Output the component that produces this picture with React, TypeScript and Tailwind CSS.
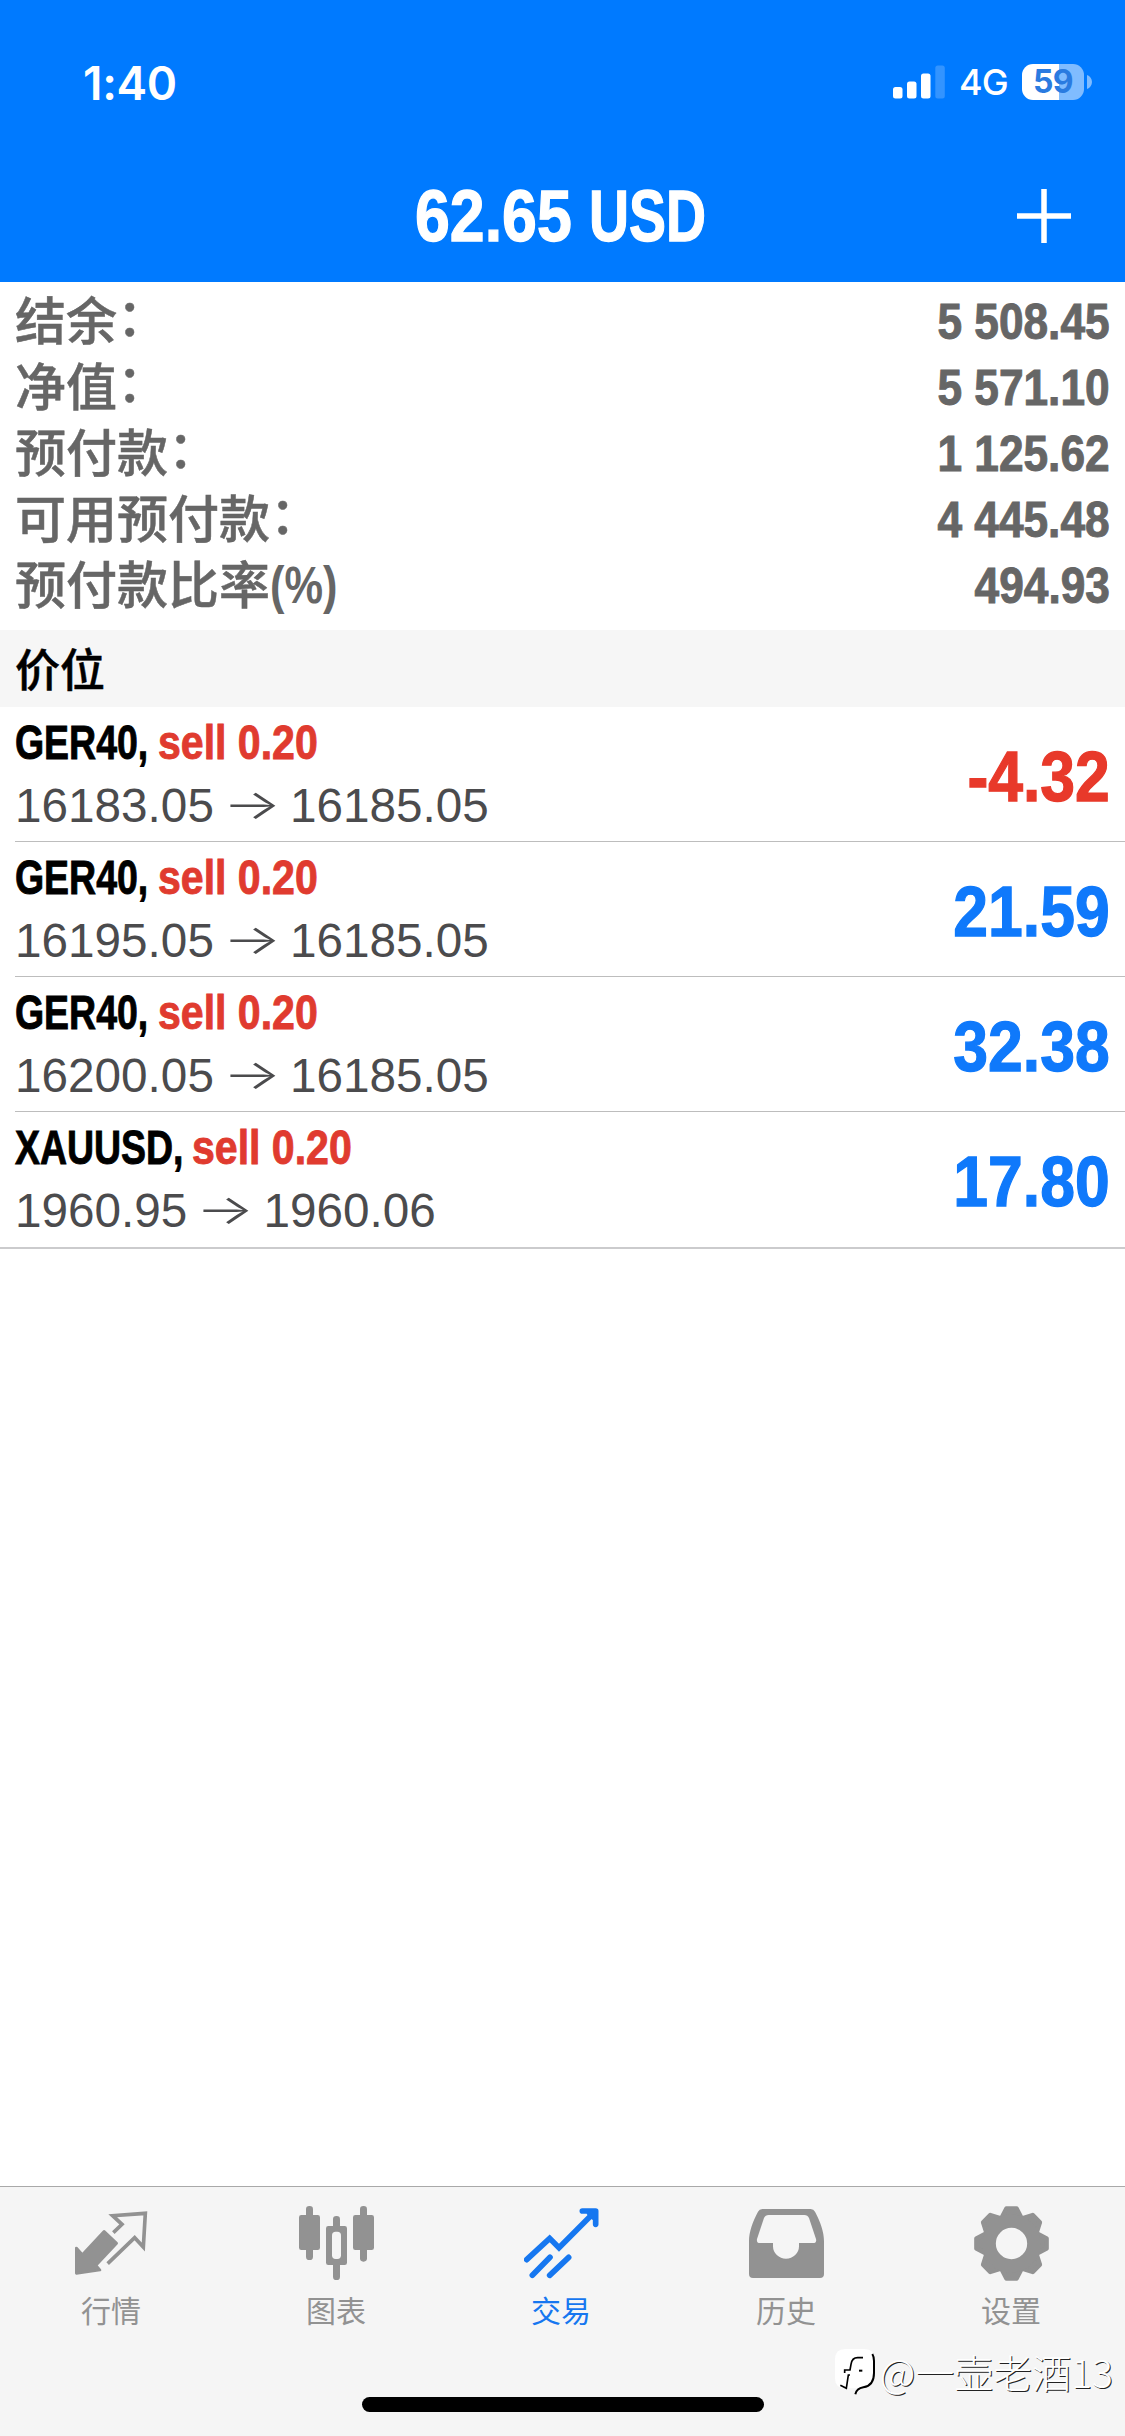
import React from "react";

const summary = [
  { label: "结余", suffix: "：", value: "5 508.45" },
  { label: "净值", suffix: "：", value: "5 571.10" },
  { label: "预付款", suffix: "：", value: "1 125.62" },
  { label: "可用预付款", suffix: "：", value: "4 445.48" },
  { label: "预付款比率", suffix: "(%)", value: "494.93" },
];

const positions = [
  { symbol: "GER40,", symbolWidth: "w-[143px]", open: "16183.05", current: "16185.05", profit: "-4.32" },
  { symbol: "GER40,", symbolWidth: "w-[143px]", open: "16195.05", current: "16185.05", profit: "21.59" },
  { symbol: "GER40,", symbolWidth: "w-[143px]", open: "16200.05", current: "16185.05", profit: "32.38" },
  { symbol: "XAUUSD,", symbolWidth: "w-[177px]", open: "1960.95", current: "1960.06", profit: "17.80" },
];

function StatusBar() {
  return (
    <div className="flex h-[150px] items-start justify-between pl-[83px] pr-[33px] pt-[56px] font-['Inter',sans-serif] text-white">
      <span className="text-[46px] leading-[54px] font-semibold tracking-[-0.3px]">1:40</span>
      <div className="flex items-center pt-[8px]">
        <svg width="52" height="34" viewBox="0 0 52 34" fill="#fff">
          <rect x="0" y="22" width="9.5" height="11.5" rx="2.5" />
          <rect x="14" y="16.5" width="9.5" height="17" rx="2.5" />
          <rect x="28" y="8.5" width="9.5" height="25" rx="2.5" />
          <rect x="42.3" y="0.5" width="9.5" height="33" rx="2.5" opacity="0.2" />
        </svg>
        <span className="ml-[14px] w-[50px] text-[36px] leading-[36px] font-medium tracking-[-1px]">4G</span>
        <div className="ml-[13px] flex h-[36px] w-[62px] items-center justify-center rounded-[11px] bg-[linear-gradient(to_right,#fff_60%,#80bcff_60%)] text-[32px] leading-[36px] font-bold tracking-[-0.5px] text-[#2a7be0]">
          59
        </div>
        <svg className="ml-[3px]" width="5" height="14" viewBox="0 0 5 14">
          <path d="M0 0C3 1 5 4 5 7s-2 6-5 7z" fill="#80bcff" />
        </svg>
      </div>
    </div>
  );
}

function Header() {
  return (
    <header className="h-[282px] bg-[#007aff]">
      <StatusBar />
      <div className="grid grid-cols-[415px_1fr_auto] items-center pt-[23px] font-['Liberation_Sans',Arial,sans-serif] text-[72px] leading-[84px] font-bold text-white">
        <span></span>
        <h1 className="flex pt-[1px] whitespace-nowrap [-webkit-text-stroke:1.3px]">
          <span className="w-[174px] origin-left scale-x-[0.87]">62.65</span>
          <span className="w-[116px] origin-left scale-x-[0.77]">USD</span>
        </h1>
        <svg className="mr-[53px]" width="56" height="56" viewBox="0 0 56 56">
          <path d="M28 1v54M1 28h54" stroke="#fff" strokeWidth="5.5" />
        </svg>
      </div>
    </header>
  );
}

function Summary() {
  return (
    <section className="h-[348px] px-[15px] pt-[3px] text-[51px] leading-[66px] text-[#666]">
      {summary.map((row) => (
        <div key={row.label} className="flex h-[66px] justify-between">
          <span className="flex font-['Noto_Sans_CJK_SC',sans-serif] font-medium [-webkit-text-stroke:0.5px]">
            <span>{row.label}</span>
            <span
              className={
                row.suffix === "："
                  ? "-mt-[4px]"
                  : "mt-[4px] origin-left scale-x-[0.85] font-['Liberation_Sans',Arial,sans-serif] font-bold [-webkit-text-stroke:0]"
              }
            >
              {row.suffix}
            </span>
          </span>
          <span className="mt-[4px] origin-right scale-x-[0.885] font-['Liberation_Sans',Arial,sans-serif] text-[50px] font-bold [-webkit-text-stroke:1px]">
            {row.value}
          </span>
        </div>
      ))}
    </section>
  );
}

function Position({ item, last }) {
  return (
    <div className={last ? "border-b-2 border-[#cbcbcd]" : ""}>
      <div
        className={
          last
            ? "flex h-[135px] pr-[15px] pl-[15px]"
            : "ml-[15px] flex h-[135px] border-b border-[#bdbdbd] pr-[15px]"
        }
      >
        <div className="flex-1 pt-[8px] font-['Liberation_Sans',Arial,sans-serif]">
          <div className="flex text-[48px] leading-[55px] font-bold whitespace-nowrap [-webkit-text-stroke:0.9px]">
            <span className={item.symbolWidth}>
              <span className="inline-block origin-left scale-x-[0.78] text-black">{item.symbol}</span>
            </span>
            <span className="origin-left scale-x-[0.855] text-[#e03b2f]">sell 0.20</span>
          </div>
          <div className="mt-[8px] flex text-[47.7px] leading-[55px] text-[#4b4b4d]">
            <span>{item.open}</span>
            <span className="w-[76px] -translate-y-[1px] scale-x-[1.5] text-center font-['Inter',sans-serif] text-[41px] font-light">
              →
            </span>
            <span>{item.current}</span>
          </div>
        </div>
        <div
          className={
            item.profit.startsWith("-")
              ? "origin-right scale-x-[0.88] pt-[30px] font-['Liberation_Sans',Arial,sans-serif] text-[71px] leading-[80px] font-bold text-[#e8392a] [-webkit-text-stroke:1.3px]"
              : "origin-right scale-x-[0.88] pt-[30px] font-['Liberation_Sans',Arial,sans-serif] text-[71px] leading-[80px] font-bold text-[#0f79fb] [-webkit-text-stroke:1.3px]"
          }
        >
          {item.profit}
        </div>
      </div>
    </div>
  );
}

function QuotesIcon() {
  return (
    <svg width="75" height="75" viewBox="222 108 225 225" fill="none" stroke="currentColor" strokeLinejoin="round">
      <path d="M229 234l18 20 65-70 38 36-62 66 12 14-71 10z" fill="currentColor" strokeWidth="8" />
      <path d="M340 188l26-25-28-26 98-7-6 101-26-28-81 78" strokeWidth="11" strokeLinejoin="miter" />
    </svg>
  );
}

function ChartIcon() {
  return (
    <svg width="75" height="75" viewBox="897 108 225 225" fill="currentColor">
      <rect x="897" y="135" width="63" height="105" rx="7" />
      <rect x="918" y="108" width="21" height="162" rx="10" />
      <rect x="999" y="138" width="21" height="192" rx="10" />
      <rect x="978" y="168" width="63" height="117" rx="7" />
      <rect x="996" y="185" width="27" height="82" rx="11" fill="#f5f5f5" />
      <rect x="1059" y="135" width="63" height="105" rx="7" />
      <rect x="1080" y="108" width="21" height="167" rx="10" />
    </svg>
  );
}

function TradeIcon() {
  return (
    <svg width="75" height="75" viewBox="223 108 225 225" fill="none" stroke="currentColor" strokeWidth="17" strokeLinecap="round" strokeLinejoin="round">
      <path d="M231 269l69-64 28 28 106-106" strokeLinejoin="miter" />
      <path d="M398 123h40v40" />
      <path d="M420 130l11 11" />
      <path d="M301 262l-53 54M357 262l-57 54" />
    </svg>
  );
}

function HistoryIcon() {
  return (
    <svg width="75" height="75" viewBox="897 108 225 225" fill="currentColor" fillRule="evenodd">
      <path d="M937 117H1082q9 0 13 8C1111 155 1122 185 1122 214V312q0 12-12 12H909q-12 0-12-12V214C897 185 908 155 924 125q4-8 13-8zM956 135q-10 0-14 9L921 207q-2 12 9 12H969V229a39 37 0 0 0 78 0V219H1089q12 0 9-12L1077 144q-4-9-14-9z" />
    </svg>
  );
}

function SettingsIcon() {
  return (
    <svg width="75" height="75" viewBox="-112.5 -112.5 225 225" fill="currentColor" stroke="currentColor" strokeWidth="14" strokeLinejoin="round">
      {[0, 45, 90, 135, 180, 225, 270, 315].map((angle) => (
        <path key={angle} d="M-15-105H15L29-78H-29z" transform={`rotate(${angle})`} />
      ))}
      <circle r="67" fill="none" strokeWidth="40" />
    </svg>
  );
}

const tabs = [
  { label: "行情", icon: <QuotesIcon /> },
  { label: "图表", icon: <ChartIcon /> },
  { label: "交易", icon: <TradeIcon />, active: true },
  { label: "历史", icon: <HistoryIcon /> },
  { label: "设置", icon: <SettingsIcon /> },
];

function Watermark() {
  return (
    <div className="absolute right-[12px] bottom-[39px] flex items-center text-white">
      <svg className="mt-[4px] mr-[3px]" width="42" height="48" viewBox="0 0 126 144">
        <path d="M31 0H88q31 0 31 31V74q0 40-38 44l-18 18 2-18H31Q0 118 0 88V31Q0 0 31 0z" fill="#fff" />
        <path d="M112 15q5 8 5 21V72q0 38-32 43-20 3-24 21" fill="none" stroke="#000" strokeWidth="6" />
        <path d="M84 26H68q-17 0-20 20l-3 17H29v9M45 78H40l-6 40-18-9" fill="none" stroke="#000" strokeWidth="5" />
        <path d="M72 65h10" stroke="#000" strokeWidth="6" />
      </svg>
      <span className="font-['Noto_Sans_CJK_SC',sans-serif] text-[39px] leading-[48px] font-light [text-shadow:1px_1px_0_#222]">
        @一壶老酒13
      </span>
    </div>
  );
}

function TabBar() {
  return (
    <nav className="relative flex h-[250px] flex-col border-t border-[#a9a9a9] bg-[#f5f5f5]">
      <div className="grid flex-1 grid-cols-5 pt-[19px]">
        {tabs.map((tab) => (
          <div
            key={tab.label}
            className={
              tab.active
                ? "flex flex-col items-center pr-[2px] text-[#1677f0]"
                : "flex flex-col items-center pr-[2px] text-[#929292]"
            }
          >
            {tab.icon}
            <span className="mt-[6px] pr-px font-['Noto_Sans_CJK_SC',sans-serif] text-[30px] leading-[44px]">
              {tab.label}
            </span>
          </div>
        ))}
      </div>
      <div className="mb-[24px] h-[15px] w-[402px] self-center rounded-full bg-black"></div>
      <Watermark />
    </nav>
  );
}

function App() {
  return (
    <div className="flex h-[2436px] w-[1125px] flex-col overflow-hidden bg-white">
      <Header />
      <Summary />
      <div className="h-[77px] bg-[#f6f6f6] pl-[15px] font-['Noto_Sans_CJK_SC',sans-serif] text-[45px] leading-[75px] font-medium text-black [-webkit-text-stroke:0.5px]">
        价位
      </div>
      <main className="flex-1">
        {positions.map((item, index) => (
          <Position key={item.open} item={item} last={index === positions.length - 1} />
        ))}
      </main>
      <TabBar />
    </div>
  );
}

export default App;
